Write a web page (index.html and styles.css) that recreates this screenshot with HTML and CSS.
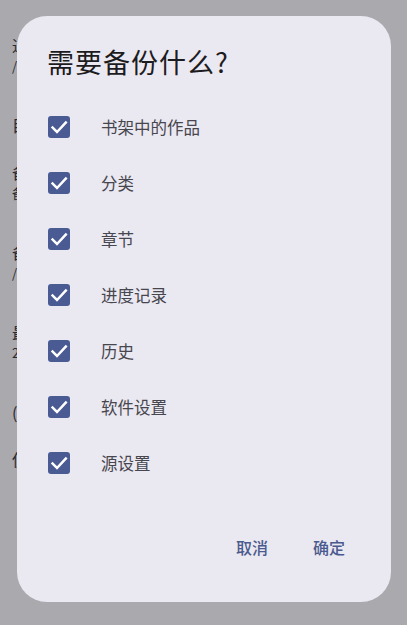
FILE: index.html
```html
<!DOCTYPE html>
<html lang="zh">
<head>
<meta charset="utf-8">
<title>备份</title>
<link rel="stylesheet" href="styles.css">
</head>
<body>
<div class="page">
  <div class="pref">
    <div class="pref-title">通用设置</div>
    <div class="pref-summary">/storage/emulated/0</div>
  </div>
  <div class="pref pref-cat">
    <div class="pref-title">目录</div>
  </div>
  <div class="pref">
    <div class="pref-title">备份路径</div>
    <div class="pref-summary">备份到本地</div>
  </div>
  <div class="pref">
    <div class="pref-title">备份恢复</div>
    <div class="pref-summary">/backup</div>
  </div>
  <div class="pref">
    <div class="pref-title">最近备份</div>
    <div class="pref-summary">2024-01-01</div>
  </div>
  <div class="pref pref-cat">
    <div class="pref-title">(其他)</div>
  </div>
  <div class="pref">
    <div class="pref-title">使用说明</div>
  </div>
</div>

<div class="dialog">
  <h1 class="dialog-title">需要备份什么?</h1>
  <ul class="options">
    <li class="option"><span class="check"><svg viewBox="0 0 22 22" width="22" height="22"><path d="M4.6 11.6 L9 16 L17.8 6.6" /></svg></span><span class="label">书架中的作品</span></li>
    <li class="option"><span class="check"><svg viewBox="0 0 22 22" width="22" height="22"><path d="M4.6 11.6 L9 16 L17.8 6.6" /></svg></span><span class="label">分类</span></li>
    <li class="option"><span class="check"><svg viewBox="0 0 22 22" width="22" height="22"><path d="M4.6 11.6 L9 16 L17.8 6.6" /></svg></span><span class="label">章节</span></li>
    <li class="option"><span class="check"><svg viewBox="0 0 22 22" width="22" height="22"><path d="M4.6 11.6 L9 16 L17.8 6.6" /></svg></span><span class="label">进度记录</span></li>
    <li class="option"><span class="check"><svg viewBox="0 0 22 22" width="22" height="22"><path d="M4.6 11.6 L9 16 L17.8 6.6" /></svg></span><span class="label">历史</span></li>
    <li class="option"><span class="check"><svg viewBox="0 0 22 22" width="22" height="22"><path d="M4.6 11.6 L9 16 L17.8 6.6" /></svg></span><span class="label">软件设置</span></li>
    <li class="option"><span class="check"><svg viewBox="0 0 22 22" width="22" height="22"><path d="M4.6 11.6 L9 16 L17.8 6.6" /></svg></span><span class="label">源设置</span></li>
  </ul>
  <div class="actions">
    <button class="btn">取消</button>
    <button class="btn">确定</button>
  </div>
</div>
</body>
</html>
```

FILE: styles.css
```css
html, body {
  margin: 0;
  padding: 0;
}
body {
  width: 407px;
  height: 625px;
  overflow: hidden;
  background: #aaa9ad;
  font-family: "Noto Sans CJK SC", "Noto Sans", sans-serif;
  position: relative;
}
.page {
  width: 5px;
  overflow: hidden;
  padding: 15px 0 0 12px;
  display: flex;
  flex-direction: column;
  color: #2a292e;
}
.pref {
  padding: 19px 0;
}
.pref-cat {
  padding-bottom: 6px;
}
.pref-title {
  font-size: 16px;
  line-height: 22px;
  white-space: nowrap;
}
.pref-summary {
  font-size: 13px;
  line-height: 20px;
  white-space: nowrap;
}

.dialog {
  position: absolute;
  left: 17px;
  top: 16px;
  width: 374px;
  box-sizing: border-box;
  padding: 28px 34px 35px 30px;
  background: #eae8f1;
  border-radius: 30px;
  display: flex;
  flex-direction: column;
}
.dialog-title {
  margin: 0 0 19px 0;
  font-size: 27px;
  line-height: 36px;
  font-weight: 400;
  letter-spacing: 1px;
  color: #1c1b20;
}
.options {
  list-style: none;
  margin: 0;
  padding: 0;
  display: flex;
  flex-direction: column;
}
.option {
  height: 56px;
  display: flex;
  align-items: center;
}
.check {
  width: 22px;
  height: 22px;
  margin-left: 1px;
  border-radius: 3px;
  background: #4a5a92;
  display: flex;
}
.check svg {
  fill: none;
  stroke: #ffffff;
  stroke-width: 2.5;
  stroke-linecap: square;
  stroke-linejoin: miter;
}
.label {
  margin-left: 31px;
  font-size: 16.5px;
  color: #47464e;
}
.actions {
  margin-top: 36px;
  display: flex;
  justify-content: flex-end;
  gap: 21px;
}
.btn {
  height: 40px;
  padding: 0 12px;
  border: none;
  background: transparent;
  font-family: "Noto Sans CJK SC", "Noto Sans", sans-serif;
  font-size: 16px;
  font-weight: 500;
  color: #4a5a8e;
}
```
